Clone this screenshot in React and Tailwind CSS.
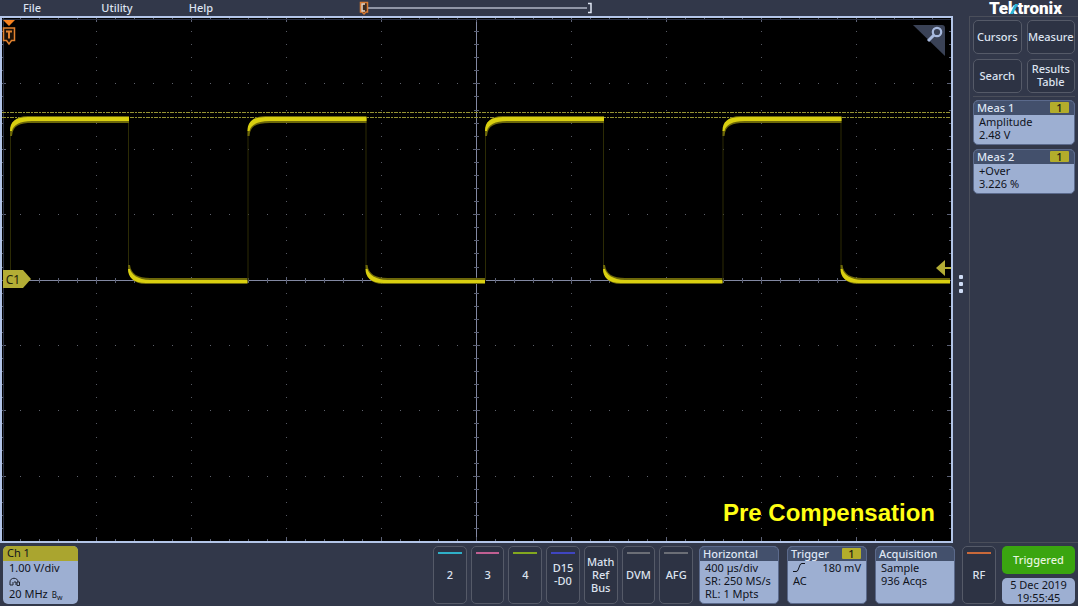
import React from "react";

const PERIOD = 237.5;
const TOP = 100;
const BASE = 263;
const DIV_X = 94.9;
const DIV_Y = 65.4;

const channels = [
  { label: ["2"], bar: "bg-[#2fb0c8]" },
  { label: ["3"], bar: "bg-[#c05f92]" },
  { label: ["4"], bar: "bg-[#83a81f]" },
  { label: ["D15", "-D0"], bar: "bg-[#3f45c0]" },
  { label: ["Math", "Ref", "Bus"], bar: null },
  { label: ["DVM"], bar: "bg-[#6b6e76]" },
  { label: ["AFG"], bar: "bg-[#6b6e76]" },
];

const measurements = [
  { title: "Meas 1", name: "Amplitude", value: "2.48 V" },
  { title: "Meas 2", name: "+Over", value: "3.226 %" },
];

const range = (n) => Array.from({ length: n }, (_, i) => i);

const Graticule = () => (
  <g shapeRendering="crispEdges">
    {/* dotted division lines */}
    {range(9).map((c) =>
      range(39).map((r) => (
        <rect
          key={`c${c}-${r}`}
          x={Math.round((c + 1) * DIV_X - 0.5)}
          y={Math.round(((r + 1) * DIV_Y) / 5)}
          width="1"
          height="1"
          fill="#565963"
        />
      ))
    )}
    {range(7).map((r) =>
      range(49).map((c) => (
        <rect
          key={`r${r}-${c}`}
          x={Math.round(((c + 1) * DIV_X) / 5 - 0.5)}
          y={Math.round((r + 1) * DIV_Y)}
          width="1"
          height="1"
          fill="#5f626c"
        />
      ))
    )}

    {/* center axes */}
    <rect x="474" y="0" width="1" height="523" fill="#8288a2" />
    <rect x="0" y="262" width="949" height="1" fill="#8288a2" />

    {/* ticks along the axes and the frame */}
    {range(39).map((i) => {
      const y = Math.round(((i + 1) * DIV_Y) / 5);
      const major = (i + 1) % 5 === 0;
      return (
        <g key={`ty${i}`} fill="#5c6175">
          <rect x={major ? 471 : 472} y={y} width={major ? 7 : 5} height="1" />
          <rect x="0" y={y} width={major ? 4 : 2} height="1" />
          <rect x={major ? 945 : 947} y={y} width="4" height="1" />
        </g>
      );
    })}
    {range(49).map((i) => {
      const x = Math.round(((i + 1) * DIV_X) / 5 - 0.5);
      const major = (i + 1) % 5 === 0;
      return (
        <g key={`tx${i}`} fill="#5c6175">
          <rect x={x} y={major ? 259 : 260} width="1" height={major ? 7 : 5} />
          <rect x={x} y="0" width="1" height={major ? 4 : 2} />
          <rect x={x} y={major ? 519 : 521} width="1" height="4" />
        </g>
      );
    })}
    <rect x="0" y="1" width="949" height="1" fill="#2b3142" />
    <rect x="1" y="0" width="1" height="523" fill="#2b3142" />
  </g>
);

// Band that bends in from the edge at x and runs flat to end.
// dir is 1 for the high level and -1 for the low level.
const band = (x, end, y, outer, inner, tail, dir) => {
  const o = y - dir * outer;
  const i = y + dir * inner;
  const t = y + dir * tail;
  return [
    `M${x} ${t}`,
    `C${x} ${y + dir * 4} ${x + 5} ${o} ${x + 18} ${o}`,
    `H${end}V${i}H${x + 22}`,
    `C${x + 10} ${i} ${x + 3} ${y + dir * 7} ${x + 2} ${t}Z`,
  ].join("");
};

const Waveform = () => (
  <g>
    {/* amplitude cursors */}
    <path
      d="M0 94.5H949M0 99.5H949"
      stroke="#959232"
      strokeWidth="1"
      strokeDasharray="4 1 2 1"
    />
    {range(4).map((i) => {
      const rise = 8 + i * PERIOD;
      const fall = rise + 118;
      const next = Math.min(rise + PERIOD, 948);
      return (
        <g key={i}>
          <path
            d={`M${rise + 0.5} ${TOP + 12}V${BASE}M${fall + 0.5} ${TOP}V${BASE - 12}`}
            stroke="#2c2b05"
            strokeWidth="1"
          />
          <path d={band(rise, fall + 1, TOP, 2, 5, 18, 1)} fill="#6d6809" />
          <path d={band(fall, next, BASE, 3, 3, 16, -1)} fill="#6d6809" />
          <path d={band(rise, fall + 1, TOP, 1, 3, 13, 1)} fill="#d9cf10" />
          <path d={band(fall, next, BASE, 2, 1, 12, -1)} fill="#d9cf10" />
        </g>
      );
    })}
  </g>
);

const Scope = () => (
  <main className="relative flex min-w-0 flex-1 border-2 border-[#b3c5e8] bg-black">
    <svg
      viewBox="0 0 949 523"
      preserveAspectRatio="none"
      className="w-full min-w-0 flex-1"
    >
      <Graticule />
      <Waveform />
    </svg>

    {/* trigger position */}
    <svg
      viewBox="0 0 14 26"
      className="absolute top-0.5 left-0 h-[26px] w-[14px]"
      fill="none"
    >
      <path d="M1 0H13L7 6Z" fill="#f58220" />
      <path d="M1.500 8H12.500V20.500H9.500L7 24L4.500 20.500H1.500Z" fill="#1d1208" stroke="#e0812f" strokeWidth="1.500" />
      <path d="M4 11.500H10M7 11.500V18.500" stroke="#e0812f" strokeWidth="2" />
    </svg>

    {/* channel 1 ground level */}
    <div className="absolute top-[252px] left-px flex h-[18px] items-center">
      <span className="flex h-full w-5 items-center justify-center bg-[#b3ad35] text-[12px] text-[#22220a]">
        C1
      </span>
      <svg viewBox="0 0 8 18" className="h-full w-2">
        <path d="M0 0L8 9L0 18Z" fill="#b3ad35" />
      </svg>
    </div>

    {/* trigger level */}
    <svg viewBox="0 0 15 16" className="absolute top-[242px] right-0 h-4 w-[15px]">
      <path d="M0 8L9 0V7H15V9H9V16Z" fill="#b3ad35" />
    </svg>

    <button
      type="button"
      aria-label="Zoom"
      className="absolute top-[7px] right-1.5 h-[31px] w-8"
    >
      <svg viewBox="0 0 32 31" className="h-full w-full" fill="none">
        <path d="M0 0H29Q32 0 32 3V31Z" fill="#3a4256" />
        <circle cx="24" cy="7" r="4.200" stroke="#a8badf" strokeWidth="2.200" />
        <path d="M21 10L15 16" stroke="#a8badf" strokeWidth="3" />
      </svg>
    </button>

    <p className="absolute right-4 bottom-3 font-['Liberation_Sans',Arial,sans-serif] text-[24px] leading-8 font-bold text-[#ffff14]">
      Pre Compensation
    </p>
  </main>
);

const Header = () => (
  <header className="flex h-4 items-center">
    <nav className="flex flex-1 items-center font-medium">
      <button type="button" className="w-16 pb-0.5">File</button>
      <button type="button" className="ml-[26px] w-[54px] pb-0.5">Utility</button>
      <button type="button" className="ml-[30px] w-[54px] pb-0.5">Help</button>
      {/* record view */}
      <svg viewBox="0 0 234 16" className="ml-[131px] h-4 w-[234px]" fill="none">
        <path d="M8 8H228" stroke="#b0b6c6" strokeWidth="1.500" />
        <path d="M229 3.500H232V12.500H229" stroke="#dfe6f4" strokeWidth="1.500" />
        <path d="M1.500 2.500H8.500V12H7L5 14L3 12H1.500Z" fill="#3a2a20" stroke="#d97b33" strokeWidth="1.500" />
        <path d="M6 4H3V11H6" stroke="#f0d9c5" strokeWidth="1.500" />
      </svg>
    </nav>
    <div className="relative mr-4 font-[Roboto,sans-serif] text-[17px] leading-4 font-black text-white">
      Tektronix
      <svg viewBox="0 0 8 10" className="absolute top-1 left-[21px] h-[10px] w-2">
        <path d="M0 10L5 0H8L3 10Z" fill="#2bb5d8" />
      </svg>
    </div>
  </header>
);

const SideButton = ({ children }) => (
  <button
    type="button"
    className="flex h-[34px] items-center justify-center rounded-[5px] border border-[#555a68] bg-[#2d3344] pb-0.5 leading-[13px] font-medium"
  >
    {children}
  </button>
);

const SourceTag = () => (
  <span className="flex h-[11px] w-[19px] items-center justify-center rounded-[1px] bg-[#b3ad2b] text-[11px] text-[#1c1c10]">
    1
  </span>
);

const Card = ({ title, tag, className, children }) => (
  <section
    className={`overflow-hidden rounded-[5px] border border-[#5b6a8c] bg-[#9dafd2] leading-[13px] text-[#10131c] ${className}`}
  >
    <h2 className="flex h-[14px] items-center justify-between bg-[#43506c] pr-[5px] pb-0.5 pl-[3px] font-medium text-[#dfe6f4]">
      {title}
      {tag && <SourceTag />}
    </h2>
    <div className="px-[5px]">{children}</div>
  </section>
);

const Sidebar = () => (
  <aside className="w-[109px] border-t border-b border-l border-[#4a4e5a] py-[3px] pr-[3px] pl-[3px]">
    <div className="grid grid-cols-2 gap-[5px] border-b border-[#4a4e5a] pb-[3px]">
      <SideButton>Cursors</SideButton>
      <SideButton>Measure</SideButton>
      <SideButton>Search</SideButton>
      <SideButton>
        Results
        <br />
        Table
      </SideButton>
    </div>
    <div className="mt-[3px] flex flex-col gap-1">
      {measurements.map((m) => (
        <Card key={m.title} title={m.title} tag className="h-[45px]">
          <p>{m.name}</p>
          <p>{m.value}</p>
        </Card>
      ))}
    </div>
  </aside>
);

const BarButton = ({ bar, children }) => (
  <button
    type="button"
    className="relative flex flex-col items-center justify-center rounded-[5px] border border-[#555a68] bg-[#2d3344] pb-0.5 leading-[13px] font-medium"
  >
    {bar && <span className={`absolute inset-x-1 top-[5px] h-0.5 ${bar}`} />}
    {children}
  </button>
);

const BottomBar = () => (
  <footer className="flex h-[63px] pt-[3px] pr-[3px] pb-0.5 pl-[3px]">
    <section className="w-[75px] overflow-hidden rounded-[5px] bg-[#9dafd2] leading-[13px] text-[#10131c]">
      <h2 className="flex h-[15px] items-center bg-[#aaa52f] px-1 pb-0.5">Ch 1</h2>
      <div className="px-1.5">
        <p>1.00 V/div</p>
        {/* probe */}
        <svg viewBox="0 0 12 13" className="h-[13px] w-3" fill="none" stroke="#20242f">
          <path d="M1 11V8C1 3 9 3 9 8M1 11H4V8M5 8H7V11M8 8H10.500V11.500H8Z" />
        </svg>
        <p className="flex items-baseline gap-1">
          20 MHz
          <span className="text-[8px] leading-none">
            B<sub className="text-[7px]">w</sub>
          </span>
        </p>
      </div>
    </section>

    <div className="mr-1.5 ml-auto grid w-[260px] grid-cols-7 gap-1">
      {channels.map((ch) => (
        <BarButton key={ch.label[0]} bar={ch.bar}>
          {ch.label.map((line) => (
            <span key={line}>{line}</span>
          ))}
        </BarButton>
      ))}
    </div>

    <div className="flex gap-2">
      <Card title="Horizontal" className="w-20">
        <p>400 µs/div</p>
        <p className="whitespace-nowrap">SR: 250 MS/s</p>
        <p>RL: 1 Mpts</p>
      </Card>
      <Card title="Trigger" tag className="w-20">
        <p className="flex items-center justify-between">
          <svg viewBox="0 0 12 9" className="h-[9px] w-3" fill="none" stroke="#10131c">
            <path d="M0 8.500H3Q4.500 8.500 5 7L7 2Q7.500 0.500 9 0.500H12" />
          </svg>
          180 mV
        </p>
        <p>AC</p>
      </Card>
      <Card title="Acquisition" className="w-20">
        <p>Sample</p>
        <p>936 Acqs</p>
      </Card>
    </div>

    <div className="mr-1.5 ml-[7px] grid w-[34px]">
      <BarButton bar="bg-[#c9693a]">RF</BarButton>
    </div>

    <div className="flex w-[73px] flex-col gap-1 text-center">
      <button
        type="button"
        className="flex-1 rounded-[5px] bg-[#3aa510] pb-0.5 font-medium text-[#e6f5df]"
      >
        Triggered
      </button>
      <div className="flex-1 rounded-[5px] bg-[#9dafd2] leading-[13px] text-[#10131c]">
        <p>5 Dec 2019</p>
        <p>19:55:45</p>
      </div>
    </div>
  </footer>
);

const App = () => (
  <div className="flex min-h-screen flex-col bg-[#32384a] font-['Noto_Sans',sans-serif] text-[11px] leading-[13px] text-[#dde3f0]">
    <Header />
    <div className="flex flex-1">
      <Scope />
      <div className="flex w-4 flex-col items-center justify-center gap-[3px] pt-2">
        {range(3).map((i) => (
          <span key={i} className="h-1 w-1 rounded-[1px] bg-[#cfdcf5]" />
        ))}
      </div>
      <Sidebar />
    </div>
    <BottomBar />
  </div>
);

export default App;
